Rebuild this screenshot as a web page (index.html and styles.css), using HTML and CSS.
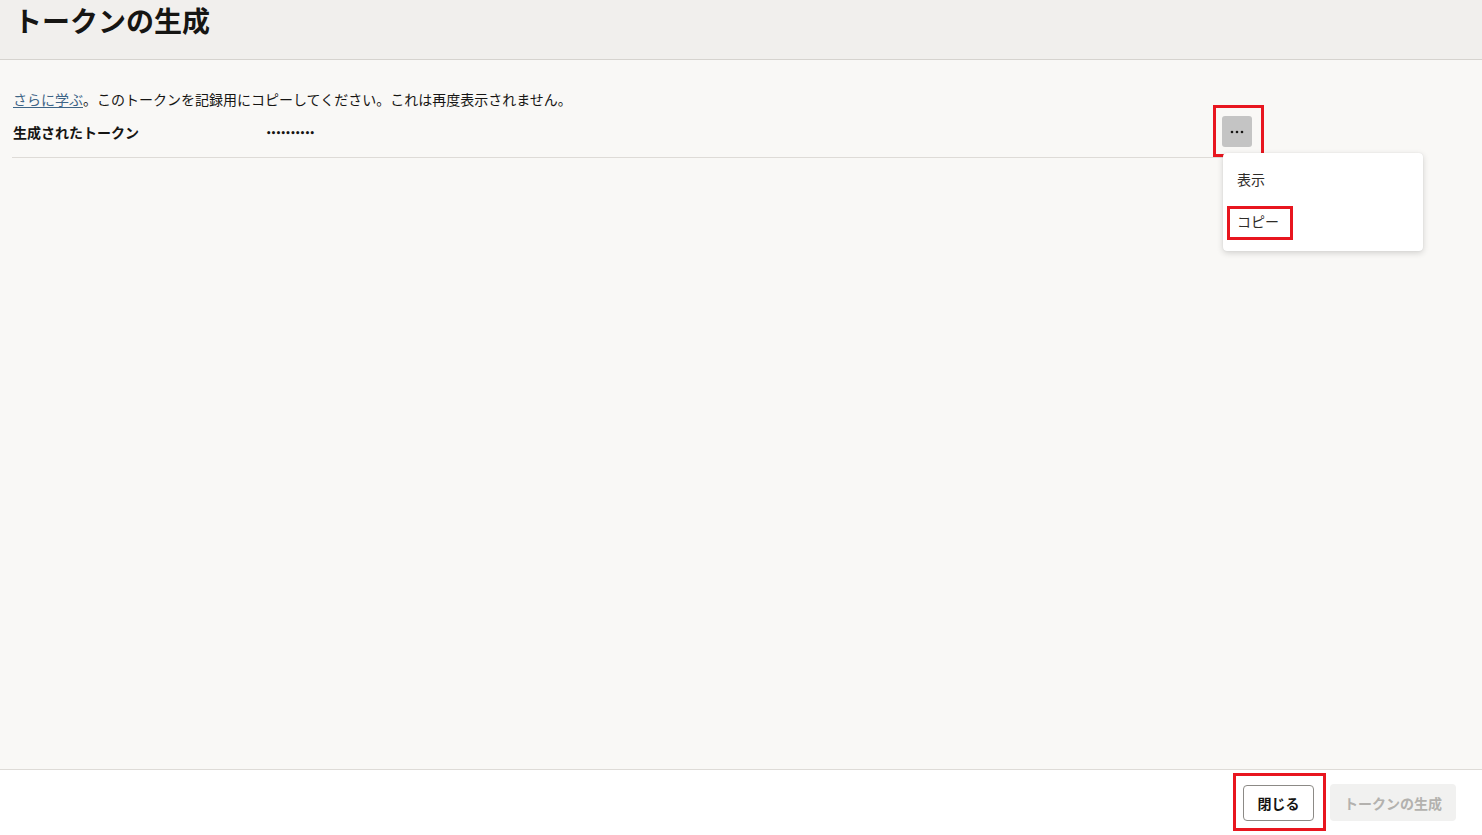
FILE: index.html
```html
<!DOCTYPE html>
<html lang="ja">
<head>
<meta charset="utf-8">
<title>トークンの生成</title>
<link rel="stylesheet" href="styles.css">
</head>
<body>
<div class="page">
  <header class="header">
    <h1 class="title">トークンの生成</h1>
  </header>
  <main class="main">
    <p class="info"><a class="link" href="#">さらに学ぶ</a>。このトークンを記録用にコピーしてください。これは再度表示されません。</p>
    <div class="row">
      <div class="label">生成されたトークン</div>
      <div class="value">••••••••••</div>
      <div class="actions">
        <button class="more" type="button" aria-label="アクション">
          <svg width="14" height="4" viewBox="0 0 14 4"><circle cx="2" cy="2" r="1.3" fill="#161513"/><circle cx="7" cy="2" r="1.3" fill="#161513"/><circle cx="12" cy="2" r="1.3" fill="#161513"/></svg>
        </button>
        <span class="mark mark-more"></span>
        <div class="menu">
          <div class="menu-item">表示</div>
          <div class="menu-item menu-item-copy">コピー<span class="mark mark-copy"></span></div>
        </div>
      </div>
    </div>
  </main>
  <footer class="footer">
    <div class="close-wrap">
      <button class="btn btn-close" type="button">閉じる</button>
      <span class="mark mark-close"></span>
    </div>
    <button class="btn btn-generate" type="button" disabled>トークンの生成</button>
  </footer>
</div>
</body>
</html>
```

FILE: styles.css
```css
* { box-sizing: border-box; }
html, body {
  margin: 0;
  padding: 0;
}
body {
  font-family: "Noto Sans CJK JP", "Noto Sans", "Liberation Sans", sans-serif;
  color: #161513;
  background: #f9f8f6;
}
.page {
  display: flex;
  flex-direction: column;
  height: 835px;
  overflow: hidden;
}
.header {
  height: 60px;
  flex: none;
  background: #f1efed;
  border-bottom: 1px solid #d6d3cf;
  padding: 0 14px;
}
.title {
  margin: 0;
  font-size: 28px;
  font-weight: 700;
  line-height: 40px;
  color: #161513;
}
.main {
  flex: 1;
  padding: 28px 12px 0 12px;
  background: #f9f8f6;
}
.info {
  margin: 0;
  font-size: 14px;
  line-height: 22px;
  padding-left: 1px;
}
.link {
  color: #3e6587;
  text-decoration: underline;
  text-underline-offset: 2px;
}
.row {
  display: flex;
  align-items: center;
  width: 1252px;
  height: 47px;
  margin-top: 1px;
  border-bottom: 1px solid #dedbd7;
  padding-bottom: 5px;
}
.label {
  width: 254px;
  padding-left: 1px;
  font-size: 14px;
  font-weight: 700;
}
.value {
  flex: 1;
  padding-top: 3px;
  font-size: 8.5px;
  font-weight: 700;
  letter-spacing: -0.6px;
  font-family: "DejaVu Sans", sans-serif;
}
.actions {
  position: relative;
  margin-right: 12px;
  width: 30px;
  height: 31px;
}
.more {
  width: 30px;
  height: 31px;
  border: none;
  border-radius: 3px;
  background: #c4c4c4;
  padding: 0;
  display: flex;
  align-items: center;
  justify-content: center;
}
.mark {
  position: absolute;
  border: 3px solid #e8161f;
  pointer-events: none;
}
.mark-more {
  left: -9px;
  top: -11px;
  width: 51px;
  height: 52px;
}
.menu {
  position: absolute;
  left: 1px;
  top: 37px;
  width: 200px;
  height: 98px;
  background: #ffffff;
  border-radius: 4px;
  box-shadow: 0 2px 6px rgba(0, 0, 0, 0.16), 0 0 1px rgba(0, 0, 0, 0.12);
  padding: 5px 0 9px 0;
  z-index: 2;
}
.menu-item {
  position: relative;
  height: 42px;
  line-height: 42px;
  padding-left: 14px;
  font-size: 14px;
  color: #2e2c29;
}
.mark-copy {
  left: 4px;
  top: 6px;
  width: 66px;
  height: 34px;
}
.footer {
  height: 66px;
  flex: none;
  background: #ffffff;
  border-top: 1px solid #dedbd7;
  display: flex;
  align-items: center;
  justify-content: flex-end;
  gap: 16px;
  padding: 0 26px 0 0;
}
.close-wrap {
  position: relative;
  display: flex;
}
.mark-close {
  left: -10px;
  top: -12px;
  width: 93px;
  height: 58px;
}
.btn {
  font-family: "Noto Sans CJK JP", "Noto Sans", sans-serif;
  font-size: 14px;
  font-weight: 700;
  height: 36px;
  border-radius: 4px;
  padding: 0;
  white-space: nowrap;
}
.btn-close {
  width: 71px;
  background: #ffffff;
  border: 1px solid #8c8a86;
  color: #161513;
}
.btn-generate {
  width: 126px;
  height: 37px;
  background: #f1f1f0;
  border: none;
  color: #b3b1ae;
}
```
